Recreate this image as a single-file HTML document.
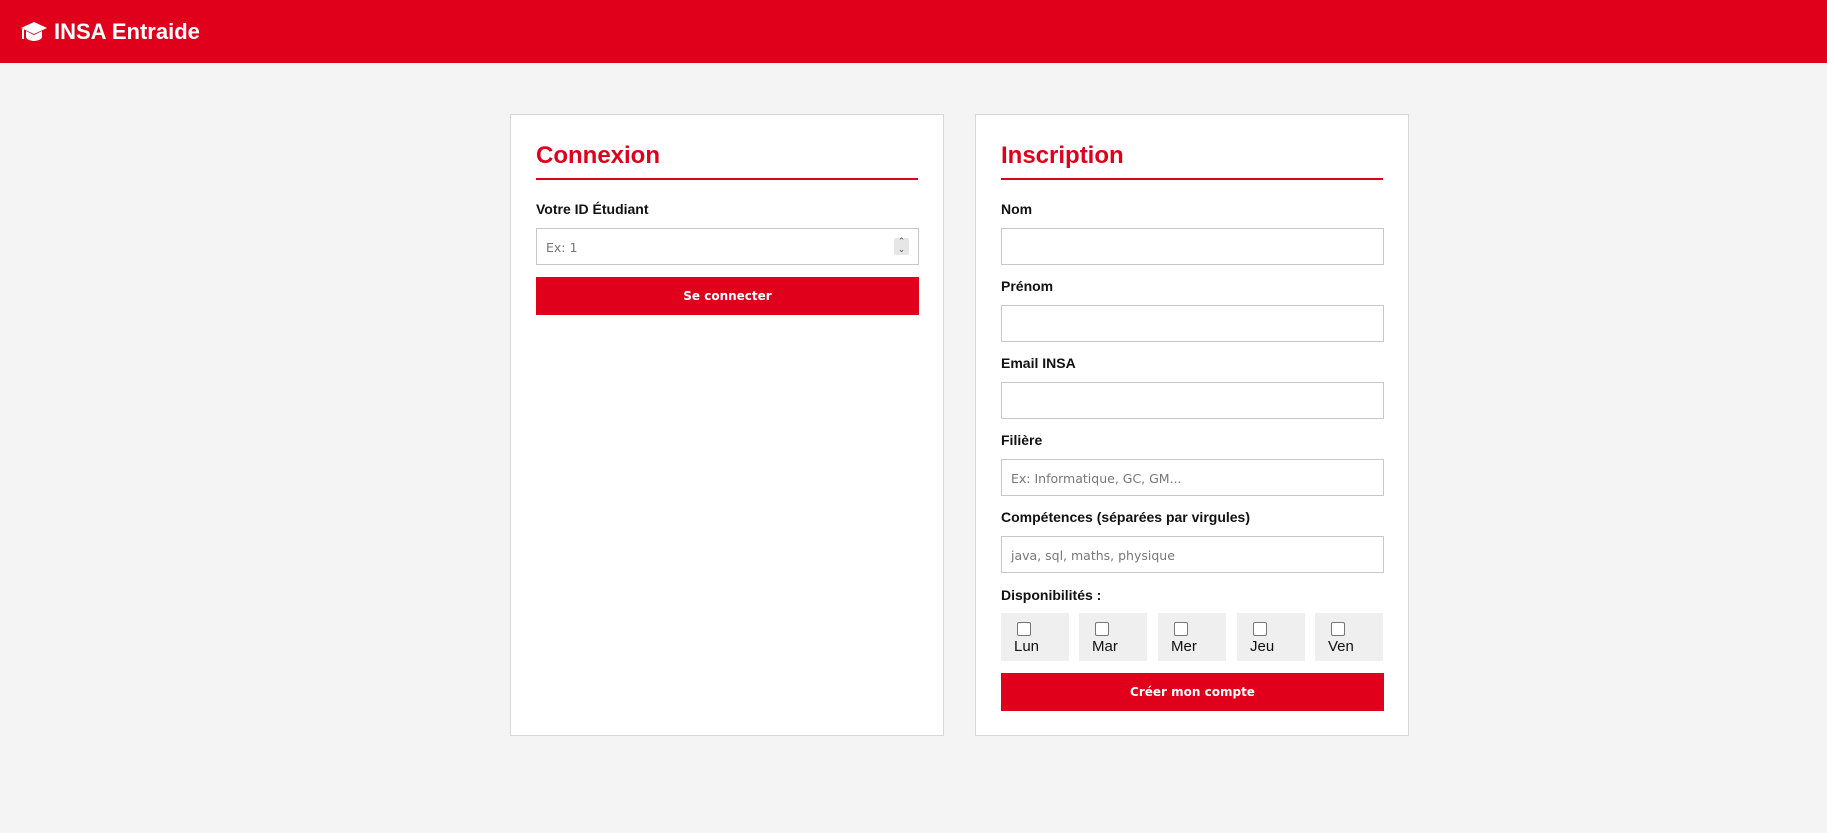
<!DOCTYPE html>
<html><head><meta charset="utf-8"><style>
*{box-sizing:border-box;margin:0;padding:0}
body{width:1827px;height:833px;background:#f4f4f4;font-family:"Liberation Sans",Arial,sans-serif;position:relative;overflow:hidden}
header{height:63px;background:#e0001b;color:#fff;display:flex;align-items:center;padding-left:20px}
header span{font-weight:bold;font-size:22px;margin-left:6px}
.card{position:absolute;top:114px;width:434px;height:622px;background:#fff;border:1px solid #d8d8d8;padding:0 25px}
h2{color:#e0001b;font-size:24px;font-weight:bold;margin-top:27px;padding-bottom:8px;border-bottom:2px solid #e0001b}
label{display:block;font-weight:bold;font-size:14px;color:#111;position:absolute;left:25px}
.in{position:absolute;left:25px;width:383px;height:37px;border:1px solid #c8c8c8;background:#fff;font-family:"DejaVu Sans",sans-serif;font-size:12.5px;color:#777;padding:11px 9px}
.btn{position:absolute;left:25px;width:383px;height:38px;background:#e0001b;color:#fff;font-family:"DejaVu Sans",sans-serif;font-weight:bold;font-size:12px;text-align:center;line-height:38px}
.day{position:absolute;top:498px;width:68px;height:48px;background:#efefef;font-size:15px;color:#111}
.day i{position:absolute;left:16px;top:9px;width:14px;height:14px;border:1px solid #767676;border-radius:2px;background:#fff}
.day b{position:absolute;left:13px;top:25px;font-weight:normal}
</style></head><body>
<header><svg width="28" height="22" viewBox="0 0 28 22"><path d="M14 1L1 7l13 6 13-6z" fill="#fff"/><path d="M6 10v6c0 2 4 4 8 4s8-2 8-4v-6l-8 4z" fill="#fff"/><path d="M3 8v10" stroke="#fff" stroke-width="2"/></svg><span>INSA Entraide</span></header>
<div class="card" style="left:510px">
<h2>Connexion</h2>
<label style="top:86px">Votre ID Étudiant</label>
<div class="in" style="top:113px">Ex: 1<span style="position:absolute;right:9px;top:9px;width:15px;height:17px;background:#e6e6e6;border-radius:2px;font-size:9px;text-align:center;line-height:8px;color:#555">⌃<br>⌄</span></div>
<div class="btn" style="top:162px">Se connecter</div>
</div>
<div class="card" style="left:975px">
<h2>Inscription</h2>
<label style="top:86px">Nom</label><div class="in" style="top:113px"></div>
<label style="top:163px">Prénom</label><div class="in" style="top:190px"></div>
<label style="top:240px">Email INSA</label><div class="in" style="top:267px"></div>
<label style="top:317px">Filière</label><div class="in" style="top:344px">Ex: Informatique, GC, GM...</div>
<label style="top:394px">Compétences (séparées par virgules)</label><div class="in" style="top:421px">java, sql, maths, physique</div>
<label style="top:472px">Disponibilités :</label>
<div class="day" style="left:25px"><i></i><b>Lun</b></div>
<div class="day" style="left:103px"><i></i><b>Mar</b></div>
<div class="day" style="left:182px"><i></i><b>Mer</b></div>
<div class="day" style="left:261px"><i></i><b>Jeu</b></div>
<div class="day" style="left:339px"><i></i><b>Ven</b></div>
<div class="btn" style="top:558px">Créer mon compte</div>
</div>
</body></html>
